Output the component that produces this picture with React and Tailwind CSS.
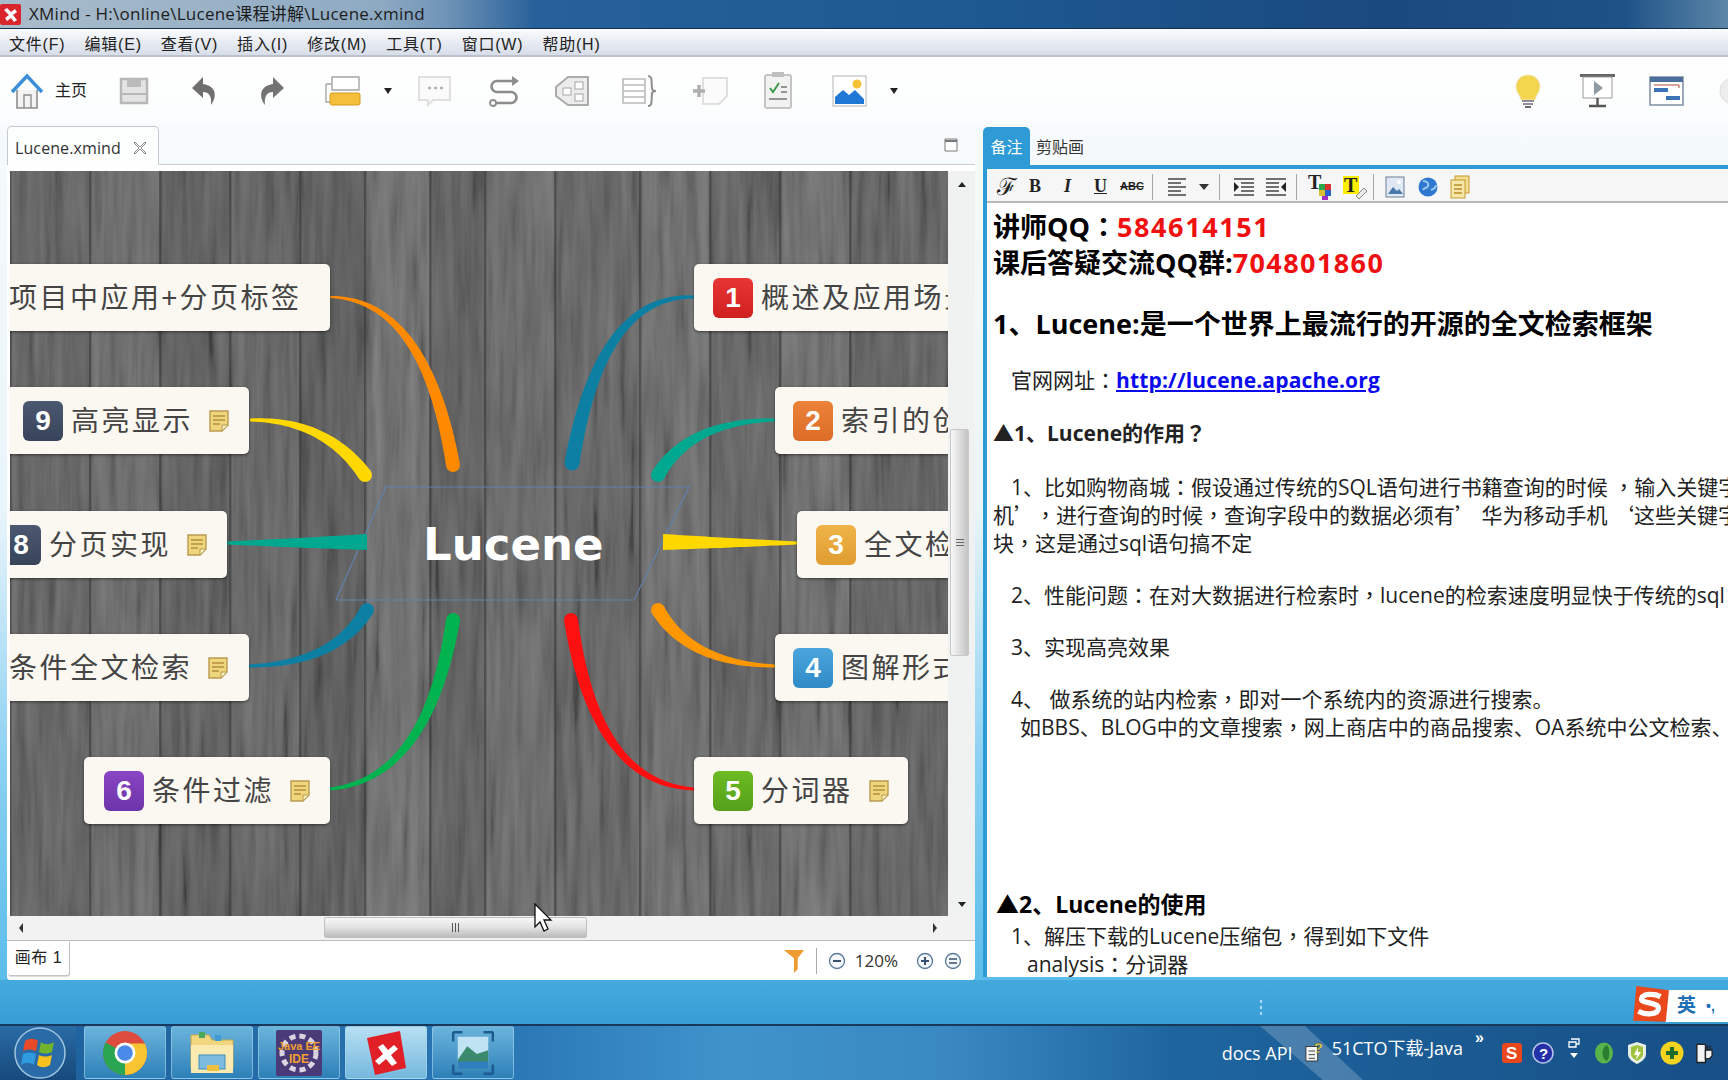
import React from "react";

function taper(x0, y0, cx, cy, x1, y1, w0, w1) {
  const L = [], R = [];
  const n = 28;
  for (let i = 0; i <= n; i++) {
    const t = i / n, u = 1 - t;
    const x = u * u * x0 + 2 * u * t * cx + t * t * x1;
    const y = u * u * y0 + 2 * u * t * cy + t * t * y1;
    let dx = 2 * u * (cx - x0) + 2 * t * (x1 - cx);
    let dy = 2 * u * (cy - y0) + 2 * t * (y1 - cy);
    const d = Math.hypot(dx, dy) || 1;
    dx /= d; dy /= d;
    const w = (w0 + (w1 - w0) * t) / 2;
    L.push(`${(x - dy * w).toFixed(1)} ${(y + dx * w).toFixed(1)}`);
    R.unshift(`${(x + dy * w).toFixed(1)} ${(y - dx * w).toFixed(1)}`);
  }
  return "M" + L.concat(R).join("L") + "Z";
}

const branches = [
  { c: "#ff8a00", p: [330, 298, 425, 300, 453, 466, 2, 14], cap: 1 },
  { c: "#ffd800", p: [250, 421, 325, 420, 365, 476, 3, 14], cap: 1 },
  { c: "#00a88f", p: [227, 544, 300, 544, 367, 543, 3, 16], cap: 0 },
  { c: "#0d7fa3", p: [249, 667, 335, 665, 367, 611, 3, 14], cap: 1 },
  { c: "#00b34f", p: [330, 790, 428, 780, 453, 621, 3, 14], cap: 1 },
  { c: "#ff0f0f", p: [694, 790, 595, 785, 571, 621, 3, 14], cap: 1 },
  { c: "#ff9800", p: [775, 667, 690, 665, 658, 611, 3, 14], cap: 1 },
  { c: "#ffd800", p: [797, 544, 730, 544, 663, 543, 3, 16], cap: 0 },
  { c: "#00a88f", p: [775, 421, 690, 422, 658, 476, 3, 14], cap: 1 },
  { c: "#0d7fa3", p: [694, 298, 600, 295, 572, 464, 3, 15], cap: 1 },
];

function Wood() {
  const planks = [
    [10, 80, "#555555"], [90, 70, "#5e5e5e"], [160, 70, "#505050"], [230, 70, "#575757"], [300, 65, "#4d4d4d"],
    [365, 65, "#636363"], [430, 55, "#515151"], [485, 70, "#5d5d5d"], [555, 85, "#575757"], [640, 70, "#616161"],
    [710, 70, "#575757"], [780, 70, "#616161"], [850, 100, "#545454"],
  ];
  return (
    <>
      <defs>
        <filter id="grain" x="0" y="0" width="100%" height="100%">
          <feTurbulence type="fractalNoise" baseFrequency="0.11 0.008" numOctaves="3" seed="11" />
          <feColorMatrix type="matrix" values="0.9 0.9 0 0 -0.45  0.9 0.9 0 0 -0.45  0.9 0.9 0 0 -0.45  0 0 0 0 0.2" />
        </filter>
      </defs>
      {planks.map(([x, w, c]) => <rect key={x} x={x} y="172" width={w} height="745" fill={c} />)}
      <rect x="10" y="172" width="940" height="745" filter="url(#grain)" />
      {planks.map(([x]) => <rect key={x} x={x - 1} y="172" width="2.5" height="745" fill="#2f2f2f" opacity="0.5" />)}
    </>
  );
}

function NoteIcon() {
  return (
    <svg viewBox="0 0 20 22" className="w-[20px] h-[22px] shrink-0">
      <path d="M1 1h18v14l-6 6H1z" fill="#efd67c" stroke="#b99a50" strokeWidth="1.4" />
      <path d="M13 21v-6h6z" fill="#fbf0c0" stroke="#b99a50" />
      <path d="M4 6h12M4 10h12M4 14h7" stroke="#b58f3e" strokeWidth="1.4" />
    </svg>
  );
}

function Badge({ n, className }) {
  return (
    <div className={`w-[40px] h-[40px] shrink-0 rounded-[6px] flex items-center justify-center text-white text-[28px] font-bold [font-family:'Liberation_Sans',sans-serif] ${className}`}>
      {n}
    </div>
  );
}

function Node({ className, n, badge, text, note = true }) {
  return (
    <div className={`absolute h-[67px] flex items-center gap-[8px] rounded-[5px] bg-[#fbf7f1] shadow-[0_1px_3px_rgba(0,0,0,0.5)] whitespace-nowrap ${className}`}>
      {n && <Badge n={n} className={badge} />}
      <span className="-mt-[3px] text-[28px] tracking-[2.5px] text-[#444] [font-family:'Noto_Sans_CJK_SC',sans-serif]">{text}</span>
      {note && <span className="ml-[8px]"><NoteIcon /></span>}
    </div>
  );
}

function MindMap() {
  return (
    <div className="relative w-[938px] h-[745px] overflow-hidden bg-[#5e5e5e] shrink-0">
      <svg viewBox="10 172 938 745" className="absolute inset-0 w-[938px] h-[745px]">
        <Wood />
        <path d="M386 488H689L634 601H336Z" fill="none" stroke="#5f82ad" strokeWidth="1.2" />
        {branches.map((b, i) => (
          <g key={i} fill={b.c}>
            <path d={taper(...b.p)} />
            {b.cap ? <circle cx={b.p[4]} cy={b.p[5]} r={b.p[7] / 2} /> : null}
          </g>
        ))}
      </svg>
      <div className="absolute left-[413px] top-[343px] text-white text-[45px] leading-[62px] font-bold [font-family:'DejaVu_Sans',sans-serif]">Lucene</div>
      <Node className="left-[-4px] top-[93px] w-[324px] pl-[3px]" text="项目中应用+分页标签" note={false} />
      <Node className="left-[-5px] top-[216px] w-[244px] pl-[18px]" n="9" badge="bg-gradient-to-b from-[#4b5870] to-[#38445a]" text="高亮显示" />
      <Node className="left-[-20px] top-[340px] w-[237px] pl-[11px]" n="8" badge="bg-gradient-to-b from-[#4b5870] to-[#38445a]" text="分页实现" />
      <Node className="left-[-4px] top-[463px] w-[243px] pl-[3px]" text="条件全文检索" />
      <Node className="left-[74px] top-[586px] w-[246px] pl-[20px]" n="6" badge="bg-gradient-to-b from-[#8a45c4] to-[#6c34a8]" text="条件过滤" />
      <Node className="left-[684px] top-[586px] w-[214px] pl-[19px]" n="5" badge="bg-gradient-to-b from-[#6dbb24] to-[#55a019]" text="分词器" />
      <Node className="left-[765px] top-[463px] w-[300px] pl-[18px]" n="4" badge="bg-gradient-to-b from-[#4aa6dc] to-[#2f8ac6]" text="图解形式" note={false} />
      <Node className="left-[787px] top-[340px] w-[300px] pl-[19px]" n="3" badge="bg-gradient-to-b from-[#efb447] to-[#e09c30]" text="全文检索" note={false} />
      <Node className="left-[765px] top-[216px] w-[300px] pl-[18px]" n="2" badge="bg-gradient-to-b from-[#ec8238] to-[#dc6d28]" text="索引的创建" note={false} />
      <Node className="left-[684px] top-[93px] w-[400px] pl-[19px]" n="1" badge="bg-gradient-to-b from-[#e83535] to-[#cf1f1f]" text="概述及应用场景" note={false} />
    </div>
  );
}

function TopToolbar() {
  return (
    <div className="h-[68px] flex items-center pl-[10px] overflow-hidden bg-gradient-to-b from-white to-[#fafcfd]">
      <svg viewBox="0 0 34 36" className="w-[34px] h-[36px] shrink-0">
        <path d="M7 17v18h20V17" fill="#f3f3f3" stroke="#8d8d8d" strokeWidth="1.6" />
        <path d="M14 35V22h7v13" fill="none" stroke="#8d8d8d" strokeWidth="1.4" />
        <path d="M2 19L17 3l15 16" fill="none" stroke="#3a8fd8" strokeWidth="3.4" />
      </svg>
      <span className="ml-[11px] w-[33px] text-[16px] text-[#222]">主页</span>
      <svg viewBox="0 0 30 28" className="ml-[31px] w-[30px] h-[28px] shrink-0">
        <path d="M2 2h26v24H2z" fill="#e4e4e4" stroke="#b8b8b8" strokeWidth="2.5" />
        <path d="M8 2h14v8H8z" fill="#bbb" />
        <path d="M2 17h26" stroke="#b8b8b8" strokeWidth="2" />
      </svg>
      <svg viewBox="0 0 26 30" className="ml-[42px] w-[26px] h-[30px] shrink-0">
        <path d="M12 1L1 12l11 10v-6c6 0 9 4 8 13 6-8 6-19-8-21z" fill="#6f6f6f" />
      </svg>
      <svg viewBox="0 0 26 30" className="ml-[42px] w-[26px] h-[30px] shrink-0">
        <path d="M14 1l11 11-11 10v-6c-6 0-9 4-8 13C0 21 0 10 14 8z" fill="#737373" />
      </svg>
      <svg viewBox="0 0 36 30" className="ml-[40px] w-[36px] h-[30px] shrink-0">
        <path d="M1 8h6V1h27v13H7v-6" fill="#fff" stroke="#a5a5a5" strokeWidth="1.4" />
        <path d="M1 8v18h4" fill="none" stroke="#a5a5a5" strokeWidth="1.4" />
        <rect x="5" y="17" width="30" height="12" rx="2" fill="#f5bf3c" stroke="#d59a20" />
      </svg>
      <span className="ml-[23px] w-0 h-0 shrink-0 border-x-[4px] border-x-transparent border-t-[6px] border-t-[#222]" />
      <svg viewBox="0 0 35 32" className="ml-[25px] w-[35px] h-[32px] shrink-0">
        <path d="M2 2h31v23H16l-5 5v-5H2z" fill="#fafafa" stroke="#e0e0e0" strokeWidth="2" />
        <path d="M11 13h3M17 13h3M23 13h3" stroke="#b4b4b4" strokeWidth="2.4" />
      </svg>
      <svg viewBox="0 0 32 32" className="ml-[36px] w-[32px] h-[32px] shrink-0">
        <path d="M29 6H9a5.5 5.5 0 000 11h14a5.5 5.5 0 010 11H4" fill="none" stroke="#8c8c8c" strokeWidth="2.6" />
        <path d="M24 1l7 5-7 5z" fill="#8c8c8c" />
        <circle cx="5" cy="28" r="3" fill="#fff" stroke="#8c8c8c" strokeWidth="1.8" />
      </svg>
      <svg viewBox="0 0 36 32" className="ml-[34px] w-[36px] h-[32px] shrink-0">
        <path d="M34 2v28H14L2 21v-9L14 2z" fill="#ececec" stroke="#ababab" strokeWidth="2" />
        <rect x="9" y="13" width="8" height="7" fill="#fff" stroke="#a5a5a5" />
        <rect x="21" y="7" width="8" height="7" fill="#fff" stroke="#a5a5a5" />
        <rect x="21" y="19" width="8" height="7" fill="#fff" stroke="#a5a5a5" />
      </svg>
      <svg viewBox="0 0 35 32" className="ml-[32px] w-[35px] h-[32px] shrink-0">
        <path d="M1 4h22v24H1zM1 10h22M1 16h22M1 22h22" fill="#fff" stroke="#bbb" strokeWidth="1.6" />
        <path d="M26 1c5 0 3 6 4 12 0 2 2 3 4 3-2 0-4 1-4 3-1 6 1 12-4 12" fill="none" stroke="#8f8f8f" strokeWidth="2" />
      </svg>
      <svg viewBox="0 0 36 32" className="ml-[36px] w-[36px] h-[32px] shrink-0">
        <path d="M10 3h24v18l-8 8H10z" fill="#fbfbfb" stroke="#e0e0e0" strokeWidth="2" />
        <path d="M6 10v12M0 16h12" stroke="#adadad" strokeWidth="3.4" />
      </svg>
      <svg viewBox="0 0 30 38" className="ml-[34px] w-[30px] h-[38px] shrink-0">
        <rect x="2" y="3" width="26" height="33" rx="2" fill="#f2f2f2" stroke="#c4c4c4" strokeWidth="2" />
        <rect x="9" y="0" width="12" height="5" fill="#bfbfbf" />
        <path d="M7 16l3 4 6-9" fill="none" stroke="#3b9a4a" strokeWidth="2" />
        <path d="M18 15h6M18 20h6M6 27h18" stroke="#777" strokeWidth="1.6" />
      </svg>
      <svg viewBox="0 0 35 32" className="ml-[39px] w-[35px] h-[32px] shrink-0">
        <rect x="1" y="1" width="33" height="30" fill="#fff" stroke="#c9c9c9" strokeWidth="1.4" />
        <path d="M3 29V22l8-7 6 5 6-5 9 9v5z" fill="#1f78d6" />
        <circle cx="25" cy="9" r="4.5" fill="#f6c237" />
      </svg>
      <span className="ml-[23px] w-0 h-0 shrink-0 border-x-[4px] border-x-transparent border-t-[6px] border-t-[#222]" />
      <svg viewBox="0 0 28 34" className="ml-auto w-[28px] h-[34px] shrink-0">
        <path d="M14 1C6 1 2 7 2 13c0 5 4 8 5 13h14c1-5 5-8 5-13C26 7 22 1 14 1z" fill="#f4d64e" stroke="#efe7c0" />
        <path d="M8 26h12v2H8zM9 29h10v2H9z" fill="#8f8a96" />
        <path d="M11 32h6v2h-6z" fill="#6e6a74" />
      </svg>
      <svg viewBox="0 0 35 34" className="ml-[38px] w-[35px] h-[34px] shrink-0">
        <path d="M0 1.5h35" stroke="#666" strokeWidth="3" />
        <path d="M3 3h29v21H3z" fill="#fff" stroke="#999" />
        <path d="M14 7l9 7-9 7z" fill="#8e9aa3" />
        <path d="M17.5 24v7M9 32h17" stroke="#555" strokeWidth="2.4" />
      </svg>
      <svg viewBox="0 0 35 30" className="ml-[34px] w-[35px] h-[30px] shrink-0">
        <rect x="1" y="1" width="33" height="28" fill="#fff" stroke="#7c8ea4" strokeWidth="1.5" />
        <path d="M1 1h33v5H1z" fill="#4a6f9d" />
        <rect x="5" y="12" width="14" height="4" fill="#3a72b8" />
        <rect x="17" y="20" width="14" height="4" fill="#3a72b8" />
        <path d="M5 9h25v3" fill="none" stroke="#b04a3a" />
      </svg>
      <svg viewBox="0 0 30 30" className="ml-[34px] -mr-[20px] w-[30px] h-[30px] shrink-0">
        <circle cx="15" cy="15" r="13" fill="#eee" stroke="#ddd" />
      </svg>
    </div>
  );
}

function MainLeft() {
  return (
    <div className="w-[968px] ml-[7px] h-[855px] flex flex-col rounded-b-[4px] bg-white overflow-hidden shrink-0">
      <div className="h-[40px] flex items-end shrink-0 relative bg-[#f6fafc] border-b border-[#c9cdd2]">
        <div className="w-[152px] h-[39px] -mb-px flex items-center pl-[7px] pt-[3px] gap-[12px] bg-[#fdfefe] border border-b-0 border-[#c6cad0] rounded-t-[5px]">
          <span className="text-[16px] text-[#333] [font-family:'Open_Sans',sans-serif] tracking-[0.1px]">Lucene.xmind</span>
          <svg viewBox="0 0 14 14" className="w-[14px] h-[14px]"><path d="M2 1l5 5 5-5 1 1-5 5 5 5-1 1-5-5-5 5-1-1 5-5-5-5z" fill="#fff" stroke="#888" /></svg>
        </div>
        <svg viewBox="0 0 14 14" className="absolute left-[937px] top-[13px] w-[14px] h-[14px]"><path d="M1 1h12v12H1z" fill="#fff" stroke="#777" /><path d="M1 3h12" stroke="#777" strokeWidth="2" /></svg>
      </div>
      <div className="flex-1 flex flex-col bg-[#f4f4f4] min-h-0">
        <div className="h-[6px] bg-white shrink-0" />
        <div className="flex shrink-0">
          <div className="w-[3px] bg-white" />
          <MindMap />
          <div className="w-[27px] relative bg-[#f0f1f1] flex flex-col items-center">
            <span className="mt-[11px] w-0 h-0 border-x-[4px] border-x-transparent border-b-[5px] border-b-[#222]" />
            <div className="absolute left-[2px] top-[258px] w-[19px] h-[227px] rounded-[2px] bg-gradient-to-r from-[#f8f8f8] to-[#c4c4c4] border border-[#c8c8c8] flex items-center justify-center">
              <span className="flex flex-col gap-[2px]"><i className="block w-[8px] h-px bg-[#666]" /><i className="block w-[8px] h-px bg-[#666]" /><i className="block w-[8px] h-px bg-[#666]" /></span>
            </div>
            <span className="mt-auto mb-[9px] w-0 h-0 border-x-[4px] border-x-transparent border-t-[5px] border-t-[#222]" />
          </div>
        </div>
        <div className="h-[24px] relative flex items-center shrink-0 bg-[#f2f2f2]">
          <span className="ml-[12px] w-0 h-0 border-y-[5px] border-y-transparent border-r-[4px] border-r-[#333]" />
          <div className="absolute left-[317px] top-[1px] w-[263px] h-[21px] rounded-[2px] bg-gradient-to-b from-[#f7f7f7] via-[#e2e2e2] to-[#bcbcbc] border border-[#c0c0c0] flex items-center justify-center gap-[2px]">
            <i className="block w-px h-[9px] bg-[#555]" /><i className="block w-px h-[9px] bg-[#555]" /><i className="block w-px h-[9px] bg-[#555]" />
          </div>
          <span className="absolute left-[926px] w-0 h-0 border-y-[5px] border-y-transparent border-l-[4px] border-l-[#333]" />
        </div>
        <div className="flex-1 flex items-center bg-white border-t border-[#bbb]">
          <div className="ml-px h-[34px] w-[62px] -mt-[4px] flex items-center justify-center border-r border-b border-[#c2c2c2] rounded-b-[3px] text-[16px] text-[#222] tracking-[0.5px] shadow-[0_1px_1px_rgba(0,0,0,0.15)]">画布 1</div>
          <svg viewBox="0 0 22 26" className="ml-auto w-[22px] h-[24px]"><path d="M0 1h22l-7 9v12l-4 4V10z" fill="#ee9c32" /></svg>
          <i className="block ml-[11px] w-px h-[26px] bg-[#aaa]" />
          <svg viewBox="0 0 18 18" className="ml-[11px] w-[18px] h-[18px]"><circle cx="9" cy="9" r="7.5" fill="#f4f7fb" stroke="#5a7a9a" strokeWidth="1.3" /><path d="M5 9h8" stroke="#35506c" strokeWidth="2" /></svg>
          <span className="ml-[9px] text-[17px] text-[#333] [font-family:'Open_Sans',sans-serif]">120%</span>
          <svg viewBox="0 0 18 18" className="ml-[18px] w-[18px] h-[18px]"><circle cx="9" cy="9" r="7.5" fill="#f4f7fb" stroke="#5a7a9a" strokeWidth="1.3" /><path d="M5 9h8M9 5v8" stroke="#35506c" strokeWidth="2" /></svg>
          <svg viewBox="0 0 18 18" className="ml-[10px] mr-[13px] w-[18px] h-[18px]"><circle cx="9" cy="9" r="7.5" fill="#f4f7fb" stroke="#5a7a9a" strokeWidth="1.3" /><path d="M5 7h8M5 11h8" stroke="#35506c" strokeWidth="1.6" /></svg>
        </div>
      </div>
    </div>
  );
}

function NotesToolbar() {
  const sep = "block w-px h-[26px] bg-[#a8a8a8] shrink-0";
  return (
    <div className="h-[34px] flex items-center bg-[#f6f6f6] border-b-2 border-[#b9b9b9] pl-[7px] pt-[3px] shrink-0 text-[#222] [font-family:'Liberation_Serif',serif]">
      <span className="w-[26px] text-center text-[24px] leading-none [font-family:'DejaVu_Serif',serif]">ℱ</span>
      <span className="w-[12px] ml-[9px] text-[18px] font-bold">B</span>
      <span className="w-[10px] ml-[23px] text-[18px] font-bold italic">I</span>
      <span className="w-[14px] ml-[20px] text-[18px] font-bold underline">U</span>
      <span className="w-[24px] ml-[12px] text-[11px] font-bold line-through [font-family:'Liberation_Sans',sans-serif]">ABC</span>
      <i className={`${sep} ml-[8px]`} />
      <svg viewBox="0 0 20 20" className="ml-[14px] w-[20px] h-[20px]"><path d="M1 2h18M1 6h13M1 10h18M1 14h13M1 18h18" stroke="#444" strokeWidth="1.5" /></svg>
      <span className="ml-[12px] w-0 h-0 border-x-[5px] border-x-transparent border-t-[6px] border-t-[#333]" />
      <i className={`${sep} ml-[10px]`} />
      <svg viewBox="0 0 21 20" className="ml-[13px] w-[21px] h-[20px]"><path d="M1 2h20M8 6h13M8 10h13M8 14h13M1 18h20" stroke="#444" strokeWidth="1.5" /><path d="M1 5l5 5-5 5z" fill="#222" /></svg>
      <svg viewBox="0 0 21 20" className="ml-[12px] w-[21px] h-[20px]"><path d="M0 2h20M0 6h13M0 10h13M0 14h13M0 18h20" stroke="#444" strokeWidth="1.5" /><path d="M20 5l-5 5 5 5z" fill="#222" /></svg>
      <i className={`${sep} ml-[9px]`} />
      <svg viewBox="0 0 24 26" className="ml-[11px] w-[24px] h-[26px]">
        <text x="0" y="15" fontSize="20" fontWeight="700" fill="#222">T</text>
        <rect x="11" y="10" width="6" height="6" fill="#2da54a" /><rect x="17" y="10" width="6" height="6" fill="#d93030" />
        <rect x="11" y="16" width="6" height="6" fill="#d9c030" /><rect x="17" y="16" width="6" height="6" fill="#2a5fd0" /><rect x="14" y="22" width="6" height="4" fill="#a12fc0" />
      </svg>
      <svg viewBox="0 0 24 26" className="ml-[11px] w-[24px] h-[26px]">
        <rect x="0" y="2" width="16" height="18" fill="#ffee00" />
        <text x="1" y="18" fontSize="20" fontWeight="700" fill="#222">T</text>
        <path d="M13 22l8-8 3 3-8 8z" fill="#e9e9e9" stroke="#888" />
      </svg>
      <i className={`${sep} ml-[6px]`} />
      <svg viewBox="0 0 20 22" className="ml-[11px] w-[20px] h-[22px]"><rect x="1" y="1" width="18" height="20" fill="#dfe8f3" stroke="#6d7f97" /><path d="M3 18l5-7 4 4 2-2 4 5z" fill="#4a78ad" /><circle cx="14" cy="6" r="2" fill="#fff" /></svg>
      <svg viewBox="0 0 20 22" className="ml-[13px] w-[20px] h-[22px]"><circle cx="10" cy="11" r="9.5" fill="#2f78cf" /><path d="M5 5c4 0 6 2 5 5s-4 1-5 4M13 14c3-1 5-2 5-5" fill="none" stroke="#9cc9f0" strokeWidth="2" /></svg>
      <svg viewBox="0 0 20 24" className="ml-[12px] w-[20px] h-[24px]"><rect x="5" y="1" width="14" height="17" fill="#f2dd94" stroke="#c49a2d" /><rect x="1" y="5" width="14" height="18" fill="#f6e6a8" stroke="#c49a2d" /><path d="M4 10h8M4 14h8M4 18h8" stroke="#b68d25" strokeWidth="1.4" /></svg>
    </div>
  );
}

// Full-width marks sit centred in the reference, as in the Traditional Chinese cut of the font.
function C({ children }) {
  return String(children).split(/([：，？])/).map((s, i) =>
    i % 2 ? <span key={i} className="[font-family:'Noto_Sans_CJK_TC',sans-serif]">{s}</span> : s
  );
}

function Q({ children }) {
  return <span className="inline-block w-[21px] [font-family:'Noto_Sans_CJK_SC',sans-serif]">{children}</span>;
}

function NotesBody() {
  const F = "[font-family:'Open_Sans','Noto_Sans_CJK_SC',sans-serif]";
  const p = "h-[28px] leading-[28px] text-[21px] text-[#222] whitespace-nowrap";
  return (
    <div className={`flex-1 bg-white overflow-hidden pl-[6px] pt-[5px] min-h-0 ${F}`}>
      <div className="h-[37px] leading-[36px] text-[27px] font-bold text-black whitespace-nowrap"><C>讲师QQ：</C><span className="text-[#f01010] tracking-[1.6px]">584614151</span></div>
      <div className="h-[36px] leading-[36px] text-[27px] font-bold text-black whitespace-nowrap">课后答疑交流QQ群:<span className="text-[#f01010] tracking-[1.4px]">704801860</span></div>
      <div className="mt-[25px] h-[36px] leading-[36px] text-[27px] font-bold text-black whitespace-nowrap">1、Lucene:是一个世界上最流行的开源的全文检索框架</div>
      <div className={`mt-[23px] pl-[18px] ${p}`}><C>官网网址：</C><span className="font-bold text-[#0a0aee] underline tracking-[0.15px]">http://lucene.apache.org</span></div>
      <div className={`mt-[25px] font-bold ${p}`}><C>▲1、Lucene的作用？</C></div>
      <div className={`mt-[26px] pl-[18px] ${p}`}><C>1、比如购物商城：假设通过传统的SQL语句进行书籍查询的时候 ，输入关键字</C></div>
      <div className={p}>机<Q>’</Q><C>，进行查询的时候，查询字段中的数据必须有</C><Q>’</Q> 华为移动手机 <Q>‘</Q>这些关键字</div>
      <div className={p}><C>块，这是通过sql语句搞不定</C></div>
      <div className={`mt-[24px] pl-[18px] ${p}`}><C>2、性能问题：在对大数据进行检索时，lucene的检索速度明显快于传统的sql</C></div>
      <div className={`mt-[25px] pl-[18px] ${p}`}>3、实现高亮效果</div>
      <div className={`mt-[23px] pl-[18px] ${p}`}><C>4、 做系统的站内检索，即对一个系统内的资源进行搜索。</C></div>
      <div className={`pl-[27px] ${p}`}><C>如BBS、BLOG中的文章搜索，网上商店中的商品搜索、OA系统中公文检索、</C></div>
      <div className="mt-[150px] pl-[3px] h-[28px] leading-[28px] text-[23px] font-bold text-black whitespace-nowrap">▲2、Lucene的使用</div>
      <div className={`mt-[3px] pl-[18px] ${p}`}><C>1、解压下载的Lucene压缩包，得到如下文件</C></div>
      <div className={`pl-[34px] ${p}`}><C>analysis：分词器</C></div>
    </div>
  );
}

function MainRight() {
  return (
    <div className="ml-[8px] flex-1 min-w-0 h-[852px] flex flex-col">
      <div className="h-[40px] flex items-end shrink-0">
        <div className="w-[47px] h-[38px] pt-[3px] flex items-center justify-center bg-[#2e9bd6] rounded-t-[5px] text-white text-[16px]">备注</div>
        <div className="ml-[6px] h-[38px] pt-[3px] flex items-center text-[16px] text-[#333]">剪贴画</div>
      </div>
      <div className="flex-1 flex flex-col min-h-0 border-t-[4px] border-l-[4px] border-[#2e9bd6]">
        <NotesToolbar />
        <NotesBody />
      </div>
    </div>
  );
}

function Taskbar() {
  const btn = "w-[82px] h-[53px] shrink-0 rounded-[3px] border border-[#a9d3ea]/60 flex items-center justify-center";
  return (
    <div className="relative h-[56px] flex bg-[linear-gradient(90deg,#1d5f9c_0%,#2a78b6_30%,#3f93cb_42%,#3988c2_55%,#1e659f_68%,#174f86_100%)] border-t-2 border-[#17395c] overflow-hidden">
      <svg viewBox="0 0 200 56" className="absolute left-[1230px] top-0 w-[200px] h-[56px]"><path d="M30 0h45l60 56H95z" fill="#fff" opacity="0.2" /></svg>
      <div className="relative w-[76px] shrink-0 pl-[4px] flex items-center justify-center bg-gradient-to-b from-[#2a6ba5] to-[#164a7c]">
        <svg viewBox="0 0 52 52" className="w-[52px] h-[52px]">
          <circle cx="26" cy="26" r="25" fill="#2a6aa6" stroke="#9fc6e0" strokeWidth="1.5" />
          <path d="M11 14c5-3 9-3 13 0l-2 10c-4-2-8-2-13 0z" fill="#e64a26" />
          <path d="M27 15c4 3 8 3 13 0l-2 10c-5 2-9 2-13 0z" fill="#72b52c" />
          <path d="M9 27c5-2 9-2 13 0l-2 11c-4-3-9-3-13 0z" fill="#2f9be0" />
          <path d="M25 28c4 2 8 2 13 0l-2 10c-5 3-9 3-13 0z" fill="#f7c21e" />
        </svg>
      </div>
      <div className="relative flex gap-[5px] ml-[8px]">
        <div className={`${btn} bg-gradient-to-b from-[#6ab4dc] to-[#2c80b8]`}>
          <svg viewBox="0 0 44 44" className="w-[46px] h-[46px]">
            <circle cx="22" cy="22" r="21" fill="#dd4b3e" />
            <path d="M22 22L3.5 12A21 21 0 0022 43z" fill="#2aa551" />
            <path d="M22 22v21A21 21 0 0041 13H22z" fill="#f6c52f" />
            <circle cx="22" cy="22" r="10" fill="#fff" /><circle cx="22" cy="22" r="7.5" fill="#4a8bea" />
          </svg>
        </div>
        <div className={`${btn} bg-gradient-to-b from-[#6ab4dc] to-[#2c80b8]`}>
          <svg viewBox="0 0 46 44" className="w-[46px] h-[44px]">
            <path d="M2 4h18l3 5h21v28H2z" fill="#f2d67e" stroke="#caa94f" />
            <rect x="10" y="1" width="6" height="6" fill="#4ca85a" /><rect x="26" y="4" width="6" height="6" fill="#3f9ad6" />
            <path d="M2 14h42v28H2z" fill="#fbeab0" />
            <rect x="10" y="24" width="26" height="14" fill="#7dbbe0" stroke="#3f8dc0" />
            <rect x="18" y="34" width="12" height="6" fill="#f0c040" />
          </svg>
        </div>
        <div className={`${btn} bg-gradient-to-b from-[#6ab4dc] to-[#2c80b8]`}>
          <svg viewBox="0 0 46 46" className="w-[46px] h-[46px]">
            <rect width="46" height="46" rx="2" fill="#4b3a78" />
            <circle cx="23" cy="23" r="17" fill="none" stroke="#d9d6e2" strokeWidth="5" strokeDasharray="6 4" />
            <text x="23" y="20" textAnchor="middle" fontSize="11" fontWeight="700" fill="#f0a030">Java EE</text>
            <text x="23" y="33" textAnchor="middle" fontSize="12" fontWeight="700" fill="#f0a030">IDE</text>
          </svg>
        </div>
        <div className={`${btn} bg-gradient-to-b from-[#b7dff2] to-[#74b8de]`}>
          <svg viewBox="0 0 44 46" className="w-[44px] h-[46px]">
            <path d="M3 8L36 1l6 37-31 7z" fill="#e01f26" />
            <path d="M14 17l5-3 5 6 6-5 4 4-7 6 6 8-5 3-6-7-7 6-4-4 8-7z" fill="#fff" />
          </svg>
        </div>
        <div className={`${btn} bg-gradient-to-b from-[#6ab4dc] to-[#2c80b8]`}>
          <svg viewBox="0 0 44 46" className="w-[42px] h-[44px]">
            <path d="M1 1h10M1 1v10M43 1H33M43 1v10M1 45h10M1 45V35M43 45H33M43 45V35" stroke="#1c5a90" strokeWidth="3" />
            <rect x="6" y="6" width="32" height="34" fill="#bfe3f2" />
            <path d="M6 30l10-14 10 8 12-4v20H6z" fill="#3b8a6e" />
            <rect x="6" y="32" width="32" height="8" fill="#2f7fc0" />
          </svg>
        </div>
      </div>
      <div className="relative ml-auto flex items-center pr-[14px] text-white">
        <span className="text-[18px] [font-family:'Open_Sans',sans-serif] mt-px">docs API</span>
        <svg viewBox="0 0 22 24" className="ml-[12px] -mt-[4px] w-[20px] h-[22px]"><rect x="1" y="7" width="13" height="16" fill="#f4f4f4" stroke="#333" /><path d="M4 12h7M4 16h7M4 20h7" stroke="#333" /><text x="10" y="14" fontSize="16" fontWeight="700" fill="#f5e04a" stroke="#333" strokeWidth="0.4">?</text></svg>
        <span className="ml-[7px] -mt-[9px] text-[18px] whitespace-nowrap [font-family:'Open_Sans','Noto_Sans_CJK_SC',sans-serif]">51CTO下载-Java</span>
        <span className="ml-[12px] -mt-[30px] text-[16px] font-bold leading-none">»</span>
        <svg viewBox="0 0 20 20" className="ml-[18px] w-[20px] h-[20px]"><rect x="0" y="0" width="20" height="20" rx="3" fill="#e8481c" /><text x="4" y="16" fontSize="17" fontWeight="700" fill="#fff" className="[font-family:'Liberation_Sans',sans-serif]">S</text></svg>
        <svg viewBox="0 0 22 22" className="ml-[10px] w-[22px] h-[22px]"><circle cx="11" cy="11" r="10" fill="#2430a8" stroke="#b7c4e8" strokeWidth="1.5" /><text x="7" y="17" fontSize="15" fontWeight="700" fill="#fff">?</text></svg>
        <div className="ml-[14px] -mt-[10px] flex flex-col items-center gap-[5px]">
          <svg viewBox="0 0 12 10" className="w-[12px] h-[10px]"><path d="M3 1h8v5H8M1 4h7v5H1z" fill="none" stroke="#fff" strokeWidth="1.3" /></svg>
          <span className="w-0 h-0 border-x-[4px] border-x-transparent border-t-[5px] border-t-white" />
        </div>
        <svg viewBox="0 0 20 22" className="ml-[14px] w-[20px] h-[22px]"><ellipse cx="10" cy="11" rx="9" ry="10.5" fill="#58b34a" /><path d="M13 3c-6 2-6 14 0 16 3-3 3-13 0-16z" fill="#2a7d33" /></svg>
        <svg viewBox="0 0 20 24" className="ml-[13px] w-[20px] h-[24px]"><path d="M10 1l9 3v9c0 5-5 8-9 10-4-2-9-5-9-10V4z" fill="#e7efe4" /><path d="M10 4l6 2v7c0 3-3 5-6 7-3-2-6-4-6-7V6z" fill="#9cc23e" /><path d="M11 6l-4 8h3l-1 5 5-8h-3z" fill="#fff" /></svg>
        <svg viewBox="0 0 24 24" className="ml-[13px] w-[24px] h-[24px]"><circle cx="12" cy="12" r="11.5" fill="#f2d320" /><path d="M12 6v12M6 12h12" stroke="#1c6a2c" strokeWidth="4" /></svg>
        <svg viewBox="0 0 20 24" className="ml-[11px] w-[19px] h-[24px]"><path d="M2 3h9v19H2z" fill="#f4f4f4" stroke="#222" strokeWidth="1.4" /><path d="M11 9h7v6l-3 3h-4zM13 4v5M16 4v5" fill="#f4f4f4" stroke="#222" strokeWidth="1.4" /></svg>
      </div>
    </div>
  );
}

export default function App() {
  return (
    <div className="relative w-[1728px] h-[1080px] overflow-hidden flex flex-col bg-[#3fa7dc] [font-family:'Liberation_Sans','Noto_Sans_CJK_SC',sans-serif]">
      <div className="h-[29px] flex items-center shrink-0 bg-[linear-gradient(90deg,#a9bccb_0%,#8eaac3_22%,#6d92b6_26%,#27609a_31%,#1e5a92_55%,#19497f_80%,#1e5287_94%,#5c86a8_100%)] border-b border-[#12324f]">
        <svg viewBox="0 0 21 21" className="w-[21px] h-[21px] shrink-0">
          <rect x="0" y="0" width="21" height="21" rx="2" fill="#d9252b" />
          <path d="M4 6l3-2 4 4 4-3 2 3-4 3 4 5-3 2-3-4-4 3-2-3 4-3z" fill="#fff" />
        </svg>
        <span className="ml-[8px] text-[17px] tracking-[0.25px] text-[#1c1c1c] whitespace-nowrap [font-family:'Open_Sans','Noto_Sans_CJK_SC',sans-serif]">XMind - H:\online\Lucene课程讲解\Lucene.xmind</span>
      </div>
      <div className="h-[28px] flex items-center gap-[19px] pl-[9px] pt-[6px] shrink-0 text-[16px] tracking-[0.8px] text-[#222] bg-gradient-to-b from-[#fafbfd] to-[#d7dde9] border-b-2 border-[#bcc2cb] whitespace-nowrap">
        {["文件(F)", "编辑(E)", "查看(V)", "插入(I)", "修改(M)", "工具(T)", "窗口(W)", "帮助(H)"].map((m) => <span key={m}>{m}</span>)}
      </div>
      <TopToolbar />
      <div className="flex shrink-0 h-[855px] bg-[linear-gradient(180deg,#f6fafc_0%,#e9f5fb_45%,#8bd0f2_75%,#5cbdea_100%)]">
        <MainLeft />
        <MainRight />
      </div>
      <div className="relative flex-1 bg-gradient-to-b from-[#44aade] to-[#379ed6]">
        <div className="absolute right-0 top-[10px] w-[63px] h-[32px] bg-white flex items-center pl-[12px] gap-[10px] text-[#1f6fb5] text-[19px] font-bold">
          <span>英</span><span className="text-[14px]">•,</span>
        </div>
        <svg viewBox="0 0 36 38" className="absolute left-[1631px] top-[5px] w-[38px] h-[40px]">
          <path d="M5 1l31 4-3 30-31-1z" fill="#e8481c" />
          <path d="M28 11c-6-3-17-3-18 2s16 3 16 9-12 7-19 3" fill="none" stroke="#fff" strokeWidth="5" />
        </svg>
        <div className="absolute left-[1260px] top-[20px] flex flex-col gap-[3px]"><i className="block w-[2px] h-[3px] bg-white/60" /><i className="block w-[2px] h-[3px] bg-white/60" /><i className="block w-[2px] h-[3px] bg-white/60" /></div>
      </div>
      <Taskbar />
      <svg viewBox="0 0 20 30" className="absolute left-[533px] top-[903px] w-[20px] h-[30px]">
        <path d="M2 1v23l5-5 4 9 4-2-4-9h7z" fill="#fff" stroke="#111" strokeWidth="1.3" />
      </svg>
    </div>
  );
}
